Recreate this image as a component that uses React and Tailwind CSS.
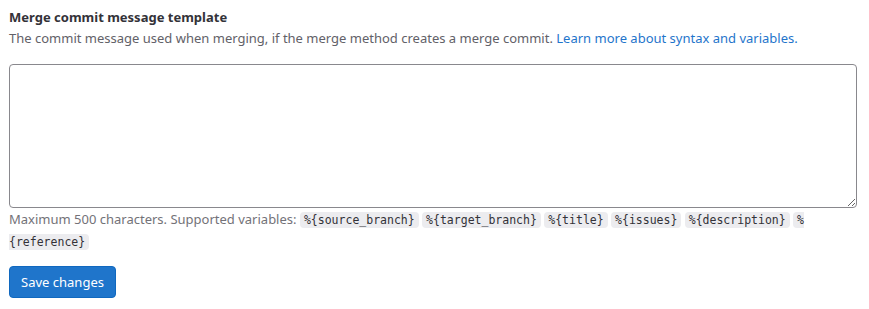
import React from 'react';

const variables = [
  '%{source_branch}',
  '%{target_branch}',
  '%{title}',
  '%{issues}',
  '%{description}',
  '%{reference}',
];

export default function App() {
  return (
    <div className="bg-white w-[869px] h-[309px] pl-[9px] pr-[12px] pt-[7px] text-[13px] text-[#333238]" style={{ fontFamily: '"Noto Sans", "Open Sans", sans-serif' }}>
      <div className="font-bold leading-[20px] text-[#333238]">Merge commit message template</div>
      <p className="mt-[1px] leading-[20px] text-[#626168]">
        The commit message used when merging, if the merge method creates a merge commit.{' '}
        <a href="#" className="text-[#1f75cb]">Learn more about syntax and variables.</a>
      </p>

      <textarea
        className="block mt-[16px] w-[848px] h-[144px] rounded-[4px] border border-[#89888d] bg-white px-3 py-2 outline-none"
      />

      <p className="mt-[1px] leading-[21px] text-[#737278] w-[800px]">
        Maximum 500 characters. Supported variables:{' '}
        {variables.map((v) => (
          <React.Fragment key={v}>
            <code
              className="rounded-[4px] bg-[#ececef] px-[4px] py-[1px] text-[11.5px] text-[#333238] break-all"
              style={{ fontFamily: '"DejaVu Sans Mono", "Liberation Mono", monospace' }}
            >
              {v}
            </code>{' '}
          </React.Fragment>
        ))}
      </p>

      <button className="mt-[13px] h-[32px] w-[107px] rounded-[4px] bg-[#1f75cb] border border-[#1068bf] text-white text-[13px] leading-[20px]">
        Save changes
      </button>
    </div>
  );
}
